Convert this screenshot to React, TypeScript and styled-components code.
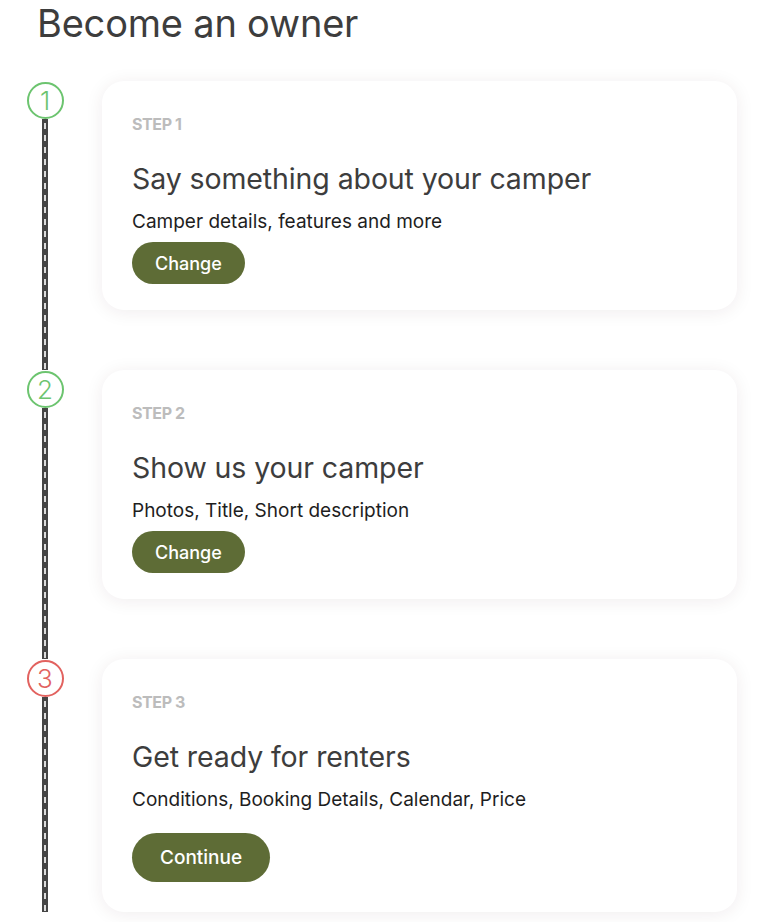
import React from "react";
import styled, { createGlobalStyle } from "styled-components";

const Global = createGlobalStyle`
  html, body { margin: 0; padding: 0; background: #ffffff; }
  body { font-family: "Inter", "Noto Sans", sans-serif; -webkit-font-smoothing: antialiased; }
  * { box-sizing: border-box; }
`;

const Page = styled.div`
  padding: 0 28px 10px 27px;
  overflow: hidden;
`;

const Heading = styled.h1`
  margin: 0 0 35px 10px;
  font-size: 38px;
  line-height: 46px;
  font-weight: 400;
  color: #3d3d3d;
  letter-spacing: -0.2px;
`;

const Step = styled.div`
  display: grid;
  grid-template-columns: 36px 1fr;
  column-gap: 39px;
`;

const Marker = styled.div`
  display: flex;
  flex-direction: column;
  align-items: center;
  padding-top: 1px;
`;

const Circle = styled.div<{ $tone: "done" | "todo" }>`
  width: 37px;
  height: 37px;
  border-radius: 50%;
  border: 2.5px solid ${(p) => (p.$tone === "done" ? "#6cc46f" : "#e2625f")};
  color: ${(p) => (p.$tone === "done" ? "#6cc46f" : "#e2625f")};
  display: flex;
  align-items: center;
  justify-content: center;
  font-family: "Inter", sans-serif;
  font-weight: 300;
  font-size: 26px;
  line-height: 1;
  flex: none;
`;

const Rail = styled.div`
  width: 6px;
  flex: 1;
  background-color: #454545;
  background-image: repeating-linear-gradient(
    to bottom,
    transparent 0px,
    transparent 4px,
    #dcdcdc 4px,
    #dcdcdc 10px,
    transparent 10px,
    transparent 12px
  );
  background-size: 2px 12px;
  background-repeat: repeat-y;
  background-position: center top;
`;

const Card = styled.div<{ $last?: boolean }>`
  background: #ffffff;
  border-radius: 22px;
  box-shadow: 0 2px 18px rgba(60, 30, 40, 0.08);
  padding: 34px 30px ${(p) => (p.$last ? "30px" : "26px")} 30px;
  margin-bottom: ${(p) => (p.$last ? "0" : "60px")};
`;

const Label = styled.div`
  font-size: 16px;
  line-height: 18px;
  font-weight: 700;
  color: #bcbcbc;
  letter-spacing: -0.4px;
`;

const Title = styled.h2`
  margin: 29px 0 0 0;
  font-size: 28.5px;
  line-height: 34px;
  font-weight: 400;
  color: #3d3d3d;
  letter-spacing: -0.1px;
`;

const Sub = styled.p`
  margin: 14px 0 0 0;
  font-size: 19px;
  line-height: 24px;
  color: #1e1e1e;
`;

const Button = styled.button<{ $big?: boolean }>`
  margin-top: ${(p) => (p.$big ? "21px" : "8px")};
  height: ${(p) => (p.$big ? "49px" : "42px")};
  padding: 0 ${(p) => (p.$big ? "28px" : "23px")};
  border: none;
  border-radius: 999px;
  background: #5e6c36;
  color: #ffffff;
  font-family: inherit;
  font-size: ${(p) => (p.$big ? "19px" : "18px")};
  font-weight: 500;
  cursor: pointer;
  display: block;
`;

type StepData = {
  n: number;
  title: string;
  sub: string;
  action: string;
  done: boolean;
};

const steps: StepData[] = [
  { n: 1, title: "Say something about your camper", sub: "Camper details, features and more", action: "Change", done: true },
  { n: 2, title: "Show us your camper", sub: "Photos, Title, Short description", action: "Change", done: true },
  { n: 3, title: "Get ready for renters", sub: "Conditions, Booking Details, Calendar, Price", action: "Continue", done: false },
];

export default function App() {
  return (
    <>
      <Global />
      <Page>
        <Heading>Become an owner</Heading>
        {steps.map((s, i) => {
          const last = i === steps.length - 1;
          return (
            <Step key={s.n}>
              <Marker>
                <Circle $tone={s.done ? "done" : "todo"}>{s.n}</Circle>
                <Rail />
              </Marker>
              <Card $last={last}>
                <Label>STEP {s.n}</Label>
                <Title>{s.title}</Title>
                <Sub>{s.sub}</Sub>
                <Button $big={!s.done}>{s.action}</Button>
              </Card>
            </Step>
          );
        })}
      </Page>
    </>
  );
}
